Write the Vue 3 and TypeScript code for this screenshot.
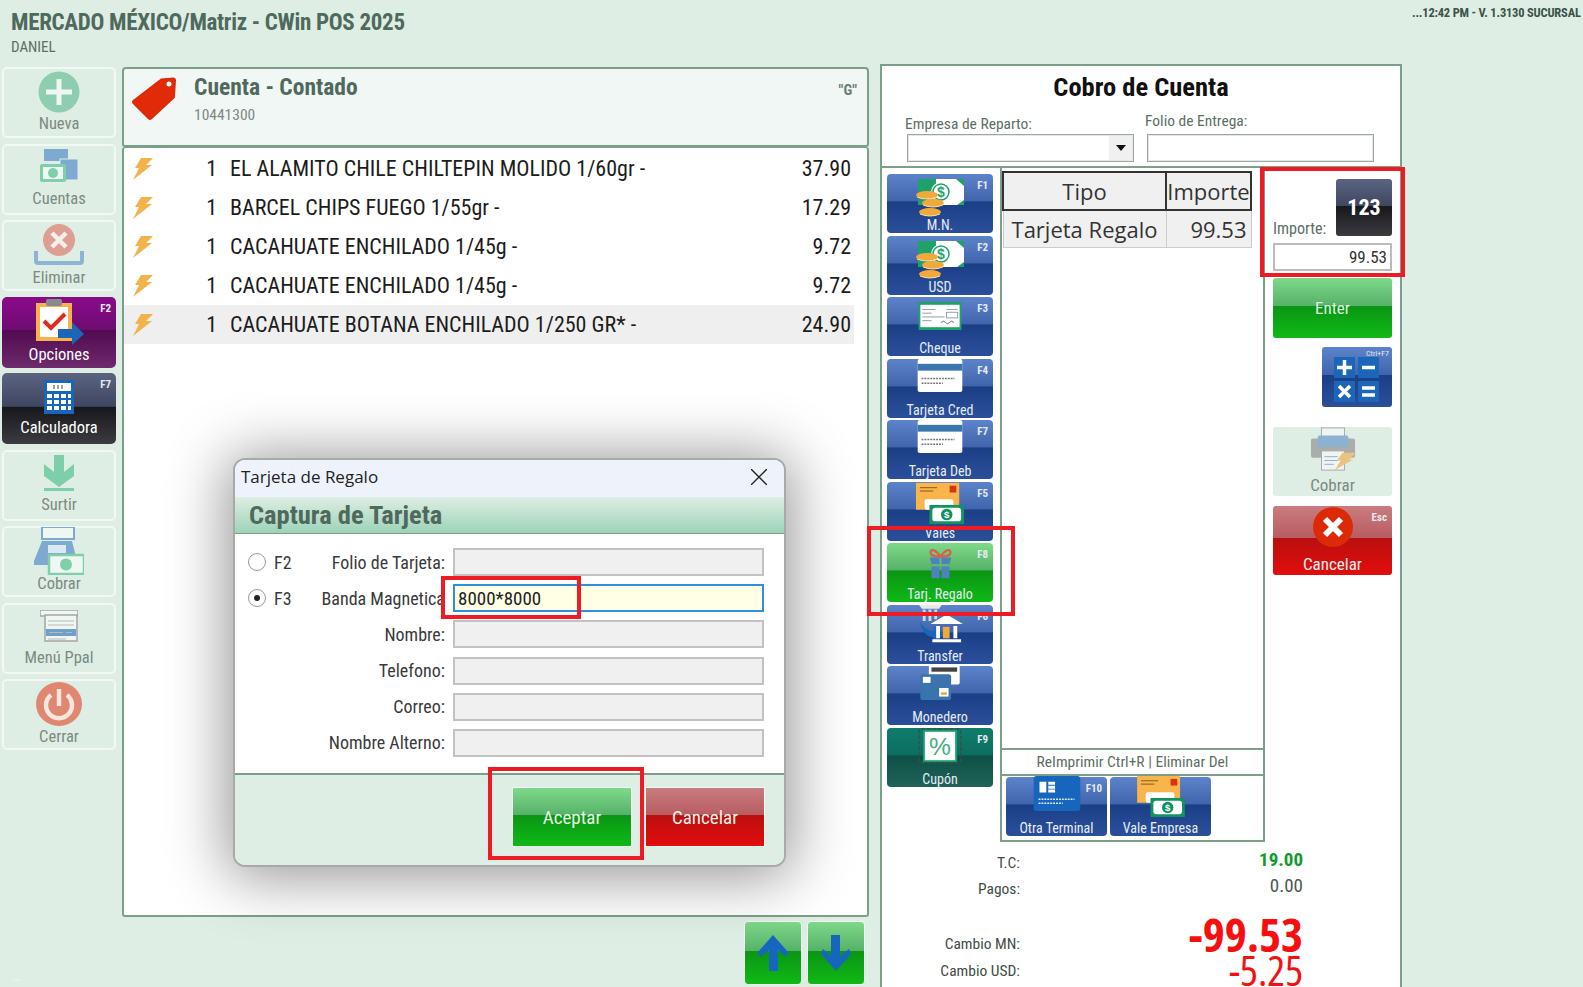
<script setup lang="ts">
interface Tile {
  label: string
  icon: string
  w: number
  h: number
  dy?: number
  ih?: number
  key?: string
  tone?: string
}

const sideTiles: Tile[] = [
  { label: 'Nueva', icon: 'plus', w: 42, h: 42, ih: 45 },
  { label: 'Cuentas', icon: 'cuentas', w: 38, h: 36, ih: 43 },
  { label: 'Eliminar', icon: 'eliminar', w: 50, h: 42 },
  { label: 'Opciones', icon: 'opciones', w: 50, h: 46, key: 'F2', tone: 'purple' },
  { label: 'Calculadora', icon: 'calc', w: 30, h: 34, ih: 43, key: 'F7', tone: 'dark' },
  { label: 'Surtir', icon: 'surtir', w: 30, h: 36, ih: 43 },
  { label: 'Cobrar', icon: 'cobrar', w: 50, h: 48 },
  { label: 'Menú Ppal', icon: 'menu', w: 38, h: 32, ih: 43 },
  { label: 'Cerrar', icon: 'power', w: 46, h: 44 },
]

const products = [
  { qty: 1, name: 'EL ALAMITO CHILE CHILTEPIN MOLIDO 1/60gr -', price: '37.90' },
  { qty: 1, name: 'BARCEL CHIPS FUEGO 1/55gr -', price: '17.29' },
  { qty: 1, name: 'CACAHUATE ENCHILADO 1/45g -', price: '9.72' },
  { qty: 1, name: 'CACAHUATE ENCHILADO 1/45g -', price: '9.72' },
  { qty: 1, name: 'CACAHUATE BOTANA ENCHILADO 1/250 GR* -', price: '24.90', active: true },
]

const payTiles: Tile[] = [
  { label: 'M.N.', icon: 'money', w: 48, h: 38, dy: 5, key: 'F1', tone: 'blue' },
  { label: 'USD', icon: 'money', w: 48, h: 38, dy: 5, key: 'F2', tone: 'blue' },
  { label: 'Cheque', icon: 'cheque', w: 46, h: 28, dy: 5, key: 'F3', tone: 'blue' },
  { label: 'Tarjeta Cred', icon: 'card', w: 46, h: 33, dy: 0, key: 'F4', tone: 'blue' },
  { label: 'Tarjeta Deb', icon: 'card', w: 46, h: 33, dy: 0, key: 'F7', tone: 'blue' },
  { label: 'Vales', icon: 'vale', w: 48, h: 44, dy: 0, key: 'F5', tone: 'blue' },
  { label: 'Tarj. Regalo', icon: 'gift', w: 27, h: 34, dy: 3, key: 'F8', tone: 'green' },
  { label: 'Transfer', icon: 'bank', w: 46, h: 46, dy: -5, key: 'F6', tone: 'blue' },
  { label: 'Monedero', icon: 'wallet', w: 44, h: 36, dy: -2, key: '', tone: 'blue' },
  { label: 'Cupón', icon: 'coupon', w: 44, h: 36, dy: 0, key: 'F9', tone: 'teal' },
]

const extraTiles: Tile[] = [
  { label: 'Otra Terminal', icon: 'terminal', w: 48, h: 35, dy: -1, key: 'F10', tone: 'blue' },
  { label: 'Vale Empresa', icon: 'vale', w: 48, h: 42, dy: -1, tone: 'blue' },
]

const cardFields = [
  { label: 'Folio de Tarjeta:', radio: 'F2', value: '' },
  { label: 'Banda Magnetica', radio: 'F3', value: '8000*8000', checked: true, focus: true },
  { label: 'Nombre:', value: '' },
  { label: 'Telefono:', value: '' },
  { label: 'Correo:', value: '' },
  { label: 'Nombre Alterno:', value: '' },
]
</script>

<template>
  <div class="page">
    <svg class="defs" aria-hidden="true">
      <symbol id="i-plus" viewBox="0 0 42 42">
        <circle cx="21" cy="21" r="20.5" fill="#8fcdb0" />
        <path d="M21 8v26M8 21h26" stroke="#eef7f2" stroke-width="5" />
      </symbol>
      <symbol id="i-cuentas" viewBox="0 0 38 36">
        <rect x="4" y="0" width="24" height="12" fill="#7ea9d1" />
        <rect x="20" y="10" width="18" height="21" fill="#7ea9d1" stroke="#deeee4" />
        <rect x="0" y="15" width="26" height="18" rx="2" fill="#7fd0aa" />
        <rect x="3" y="18" width="20" height="12" fill="#eef7f2" />
        <circle cx="13" cy="24" r="5" fill="#7fd0aa" />
      </symbol>
      <symbol id="i-eliminar" viewBox="0 0 50 42">
        <path d="M2 27v10a2 2 0 0 0 2 2h42a2 2 0 0 0 2-2V27" fill="none" stroke="#8fb3d4" stroke-width="4" />
        <circle cx="25" cy="16" r="16" fill="#dd9f92" />
        <path d="M18 9l14 14M32 9L18 23" stroke="#f6eeea" stroke-width="4.5" />
      </symbol>
      <symbol id="i-opciones" viewBox="0 0 50 46">
        <rect x="2" y="4" width="36" height="38" fill="#f7b24c" />
        <rect x="6" y="8" width="28" height="30" fill="#fff" />
        <rect x="12" y="0" width="16" height="7" rx="2" fill="#8a8a8a" />
        <path d="M10 22l7 7 14-14" fill="none" stroke="#e02a1c" stroke-width="4" />
        <path d="M24 30h14v-7l12 12-12 11v-7H24z" fill="#1b66b8" />
      </symbol>
      <symbol id="i-calc" viewBox="0 0 30 34">
        <rect width="30" height="34" fill="#1766bd" />
        <rect x="3" y="3" width="24" height="8" fill="#fff" />
        <path d="M10 5v4M14 5v4M18 5v4" stroke="#444" />
        <path d="M3 14h5v4H3zM10 14h5v4h-5zM17 14h5v4h-5zM24 14h3v4h-3zM3 20h5v4H3zM10 20h5v4h-5zM17 20h5v4h-5zM24 20h3v4h-3zM3 26h5v4H3zM10 26h5v4h-5zM17 26h5v4h-5zM24 26h3v4h-3z" fill="#fff" />
      </symbol>
      <symbol id="i-surtir" viewBox="0 0 30 36">
        <path d="M10 0h10v17l10-8v12L15 32 0 21V9l10 8z" fill="#7dcfa9" />
        <rect y="33" width="30" height="3" fill="#7dcfa9" />
      </symbol>
      <symbol id="i-cobrar" viewBox="0 0 50 48">
        <rect x="8" y="0" width="32" height="12" fill="#eef7f2" stroke="#7ea9d1" stroke-width="2" />
        <path d="M8 14h30l6 24H0v-4z" fill="#7ea9d1" />
        <path d="M14 18h18v8H14z" fill="#dbe9f4" />
        <rect x="15" y="28" width="35" height="19" fill="#eef7f2" stroke="#7fd0aa" stroke-width="2.5" />
        <circle cx="32" cy="37.500" r="6" fill="#7fd0aa" />
      </symbol>
      <symbol id="i-menu" viewBox="0 0 38 32">
        <rect x="0" y="0" width="38" height="6" fill="#eef7f2" stroke="#a5a5a5" stroke-width="1.5" />
        <rect x="5" y="5" width="32" height="26" fill="#eef7f2" stroke="#a5a5a5" stroke-width="1.5" />
        <rect x="6" y="19" width="30" height="7" fill="#6f9fcb" />
        <path d="M8 11h26M8 15h26M9 22.500h14M26 22.500h6M8 29h18" stroke="#b8b8b8" stroke-width="1.2" />
      </symbol>
      <symbol id="i-power" viewBox="0 0 46 44">
        <ellipse cx="23" cy="22" rx="23" ry="22" fill="#df8771" />
        <path d="M15 13a13 13 0 1 0 16 0" fill="none" stroke="#f5e6df" stroke-width="4.500" />
        <path d="M23 7v17" stroke="#f5e6df" stroke-width="4.500" />
      </symbol>
      <symbol id="i-tag" viewBox="0 0 44 44">
        <path d="M29 1.500l12-1q3 0 3 3l-1 16q0 2-2 3L20 42q-2 2-4 0L1 27q-2-2 0-4z" fill="#e02a08" />
        <circle cx="37" cy="7" r="2.500" fill="#fff" />
      </symbol>
      <symbol id="i-bolt" viewBox="0 0 20 22">
        <path d="M8 0h12l-7 7h6L0 22l6-12H2z" fill="#f2b24c" />
      </symbol>
      <symbol id="i-money" viewBox="0 0 48 38">
        <rect x="2" y="0" width="46" height="26" fill="#fff" />
        <path d="M48 0h-8l8 7zM48 26h-7l7-5z" fill="#1ea26a" />
        <rect x="2" y="0" width="18" height="26" fill="#1ea26a" />
        <circle cx="25" cy="13" r="10" fill="#fff" />
        <circle cx="25" cy="13" r="8" fill="none" stroke="#1ea26a" stroke-width="1.500" />
        <text x="25" y="18" font-size="14" font-weight="700" text-anchor="middle" fill="#1ea26a" font-family="Liberation Sans, sans-serif">$</text>
        <ellipse cx="11" cy="16" rx="11" ry="4" fill="#f2a93b" />
        <ellipse cx="17" cy="24" rx="11" ry="4" fill="#f2a93b" />
        <ellipse cx="14" cy="33" rx="11" ry="4" fill="#f2a93b" />
        <path d="M1 18q10 4 20 0M7 26q10 4 20 0M4 35q10 4 20 0" fill="none" stroke="#fbe0a8" />
      </symbol>
      <symbol id="i-cheque" viewBox="0 0 46 30">
        <rect width="46" height="30" fill="#1ea26a" />
        <rect x="2" y="3" width="42" height="24" fill="#fff" />
        <path d="M4 8h14M30 8h12M4 12h10M4 16h24M4 20h10" stroke="#8a9aa0" />
        <rect x="30" y="11" width="12" height="6" fill="none" stroke="#8a9aa0" />
        <path d="M24 22q3-3 5 0t4 0 5 0" fill="none" stroke="#666" />
      </symbol>
      <symbol id="i-card" viewBox="0 0 46 34">
        <rect width="46" height="34" rx="2" fill="#fff" />
        <rect y="5" width="46" height="7" fill="#3b76ad" />
        <path d="M4 20h34M4 25h22" stroke="#777" stroke-width="1.500" stroke-dasharray="2 1" />
      </symbol>
      <symbol id="i-vale" viewBox="0 0 50 44">
        <rect width="45" height="28" fill="#f9b44c" />
        <path d="M4 5h18M4 8.500h14" stroke="#7a5a20" />
        <rect x="35" y="3" width="7" height="7" fill="#d9340f" />
        <rect x="9" y="17" width="30" height="11" rx="2" fill="#fff" />
        <rect x="14" y="23" width="36" height="20" fill="#11925f" />
        <rect x="17" y="26" width="30" height="14" rx="3" fill="#fff" />
        <circle cx="32" cy="33" r="6" fill="#11925f" />
        <text x="32" y="37" font-size="10" font-weight="700" text-anchor="middle" fill="#fff" font-family="Liberation Sans, sans-serif">$</text>
      </symbol>
      <symbol id="i-gift" viewBox="0 0 30 34">
        <path d="M15 10C8 0 3 2 4 6s6 4 11 4c5 0 10 0 11-4s-4-6-11 4z" fill="none" stroke="#d9604a" stroke-width="2.500" />
        <path d="M3 11h11v7H5zM16 11h11l-2 7h-9zM5 21h9v13H5zM16 21h9v13h-9z" fill="#4e82bd" />
      </symbol>
      <symbol id="i-bank" viewBox="0 0 48 44">
        <path d="M2 3h24l-3 4H5z" fill="#e9e9e9" />
        <path d="M6 8h3v12H6zM12 8h3v12h-3zM18 8h3v10h-3z" fill="#d6d6d6" />
        <path d="M3 20q6 12 16 10l-2-5 12 9-12 8v-5Q6 36 3 20z" fill="#1b66b8" />
        <path d="M31 13l17 10H14z" fill="#fff" />
        <path d="M20 25h4v13h-4zM38 25h4v13h-4zM16 39h30v3H16z" fill="#fff" />
        <rect x="27" y="26" width="7" height="12" fill="#f2a93b" />
      </symbol>
      <symbol id="i-wallet" viewBox="0 0 46 42">
        <rect x="10" y="0" width="36" height="24" rx="2" fill="#fff" />
        <rect x="13" y="4" width="30" height="5" fill="#444" />
        <rect x="0" y="12" width="36" height="30" rx="3" fill="#3a74ad" />
        <rect x="3" y="15" width="9" height="7" fill="#fff" />
        <rect x="22" y="28" width="11" height="10" fill="#fff" />
        <rect x="24" y="33" width="7" height="3" fill="#f2a93b" />
      </symbol>
      <symbol id="i-coupon" viewBox="0 0 46 38">
        <rect x="1" y="1" width="44" height="36" rx="2" fill="none" stroke="#3b4e4b" stroke-width="1.500" stroke-dasharray="4 2" />
        <rect x="5" y="2" width="36" height="34" fill="#19a069" />
        <rect x="7" y="4" width="32" height="30" fill="#fff" />
        <text x="23" y="29" font-size="26" text-anchor="middle" fill="#3fb07f" font-family="Liberation Sans, sans-serif">%</text>
      </symbol>
      <symbol id="i-terminal" viewBox="0 0 48 36">
        <rect width="48" height="36" rx="3" fill="#1766bd" />
        <path d="M6 6h7v11H6zM15 6h7v3h-7zM15 10h7v3h-7zM15 14h7v3h-7z" fill="#fff" />
        <path d="M5 24h37M5 28h25" stroke="#dce9f6" stroke-width="1.500" stroke-dasharray="2 1" />
      </symbol>
      <symbol id="i-ops" viewBox="0 0 46 46">
        <rect width="21" height="21" fill="#1b66b8" />
        <rect x="24" width="21" height="21" fill="#1b66b8" />
        <rect y="24" width="21" height="21" fill="#1b66b8" />
        <rect x="24" y="24" width="21" height="21" fill="#1b66b8" />
        <path d="M10.500 3v15M3 10.500h15M28 10.500h13M5 29l11 11M16 29L5 40M28 31h13M28 38h13" stroke="#fff" stroke-width="3.500" />
      </symbol>
      <symbol id="i-printer" viewBox="0 0 48 44">
        <rect x="12" y="0" width="24" height="12" fill="#f0f5f2" stroke="#a9a9a9" />
        <path d="M3 11h42a2 2 0 0 1 2 2v16a2 2 0 0 1-2 2H3a2 2 0 0 1-2-2V13a2 2 0 0 1 2-2z" fill="#a9aeab" />
        <rect x="8" y="8" width="32" height="12" rx="2" fill="#8db1d1" />
        <rect x="12" y="24" width="24" height="20" fill="#f0f5f2" stroke="#a9a9a9" />
        <path d="M15 30h14M15 34h14M15 38h10" stroke="#8db1d1" />
        <path d="M34 26h14l-7 7h4L26 44l6-10h-4z" fill="#eac382" />
      </symbol>
      <symbol id="i-cancel" viewBox="0 0 40 40">
        <circle cx="20" cy="20" r="20" fill="#dd2a06" />
        <path d="M12 12l16 16M28 12L12 28" stroke="#fff" stroke-width="6" />
      </symbol>
      <symbol id="i-up" viewBox="0 0 30 36">
        <path d="M15 0l15 17-2 5-8-7v21h-9V15l-9 7-2-5z" fill="#1766bd" />
      </symbol>
      <symbol id="i-down" viewBox="0 0 30 36">
        <path d="M10 0h9v21l9-7 2 5-15 17L0 19l2-5 8 7z" fill="#1766bd" />
      </symbol>
    </svg>

    <header class="topbar">
      <div>
        <div class="app-title">MERCADO MÉXICO/Matriz - CWin POS 2025</div>
        <div class="user">DANIEL</div>
      </div>
      <div class="clock">...12:42 PM - V. 1.3130 SUCURSAL</div>
    </header>

    <div class="work">
      <nav class="side">
        <button v-for="t in sideTiles" :key="t.label" class="side-tile" :class="t.tone">
          <span v-if="t.key" class="fkey">{{ t.key }}</span>
          <span class="side-icon" :style="{ height: (t.ih ?? 46) + 'px' }">
            <svg :width="t.w" :height="t.h"><use :href="'#i-' + t.icon" /></svg>
          </span>
          <span class="side-label">{{ t.label }}</span>
        </button>
      </nav>

      <main class="center">
        <section class="ticket-head">
          <svg class="tag" width="44" height="44"><use href="#i-tag" /></svg>
          <div class="ticket-text">
            <div class="ticket-title">Cuenta - Contado</div>
            <div class="ticket-no">10441300</div>
          </div>
          <div class="ticket-flag">"G"</div>
        </section>

        <section class="ticket-list">
          <div v-for="(p, i) in products" :key="i" class="line" :class="{ active: p.active }">
            <svg class="bolt" width="20" height="22"><use href="#i-bolt" /></svg>
            <span class="qty">{{ p.qty }}</span>
            <span class="name">{{ p.name }}</span>
            <span class="price">{{ p.price }}</span>
          </div>
        </section>

        <div class="arrows">
          <button class="arrow green"><svg width="30" height="36"><use href="#i-up" /></svg></button>
          <button class="arrow green"><svg width="30" height="36"><use href="#i-down" /></svg></button>
        </div>
      </main>

      <aside class="charge">
        <div class="charge-top">
          <h1>Cobro de Cuenta</h1>
          <div class="delivery">
            <label class="field">
              <span class="lab-a">Empresa de Reparto:</span>
              <span class="select"><span class="select-btn"><i class="caret"></i></span></span>
            </label>
            <label class="field">
              <span class="lab-b">Folio de Entrega:</span>
              <input class="plain" readonly />
            </label>
          </div>
        </div>

        <div class="charge-body">
          <div class="pay-col">
            <button v-for="t in payTiles" :key="t.label" class="pay-tile" :class="t.tone">
              <span v-if="t.key" class="fkey">{{ t.key }}</span>
              <svg class="pay-icon" :width="t.w" :height="t.h" :style="{ marginTop: t.dy + 'px' }"><use :href="'#i-' + t.icon" /></svg>
              <span class="pay-label">{{ t.label }}</span>
            </button>
          </div>

          <div class="pay-mid">
            <div class="pay-grid">
              <table>
                <thead>
                  <tr><th class="c1">Tipo</th><th class="c2">Importe</th></tr>
                </thead>
                <tbody>
                  <tr><td class="c1">Tarjeta Regalo</td><td class="c2 num">99.53</td></tr>
                </tbody>
              </table>
            </div>
            <div class="hint">ReImprimir Ctrl+R | Eliminar Del</div>
            <div class="extra">
              <button v-for="t in extraTiles" :key="t.label" class="pay-tile" :class="t.tone">
                <span v-if="t.key" class="fkey">{{ t.key }}</span>
                <svg class="pay-icon" :width="t.w" :height="t.h" :style="{ marginTop: t.dy + 'px' }"><use :href="'#i-' + t.icon" /></svg>
                <span class="pay-label">{{ t.label }}</span>
              </button>
            </div>
          </div>

          <div class="pay-right">
            <div class="amount-row">
              <span class="amount-label">Importe:</span>
              <button class="keypad dark">123</button>
            </div>
            <input class="amount" value="99.53" readonly />
            <button class="big green enter">Enter</button>
            <button class="ops blue">
              <span class="fkey tiny">Ctrl+F7</span>
              <svg width="46" height="46"><use href="#i-ops" /></svg>
            </button>
            <button class="big-tile off">
              <svg width="46" height="44"><use href="#i-printer" /></svg>
              <span>Cobrar</span>
            </button>
            <button class="big-tile red">
              <span class="fkey">Esc</span>
              <svg width="40" height="40"><use href="#i-cancel" /></svg>
              <span>Cancelar</span>
            </button>
          </div>
        </div>

        <div class="totals">
          <span class="t-lab">T.C:</span><span class="t-val tc">19.00</span>
          <span class="t-lab">Pagos:</span><span class="t-val">0.00</span>
          <span class="t-lab gap">Cambio MN:</span><span class="t-val gap change">-99.53</span>
          <span class="t-lab">Cambio USD:</span><span class="t-val usd">-5.25</span>
        </div>
      </aside>
    </div>

    <div class="dots">...</div>

    <div class="dialog">
      <div class="dlg-title">
        <span>Tarjeta de Regalo</span>
        <svg width="16" height="16" viewBox="0 0 16 16"><path d="M0 0l16 16M16 0L0 16" stroke="#222" stroke-width="1.400" /></svg>
      </div>
      <div class="dlg-head">Captura de Tarjeta</div>
      <div class="dlg-form">
        <div v-for="f in cardFields" :key="f.label" class="dlg-row">
          <span class="radio-cell">
            <template v-if="f.radio">
              <i class="radio" :class="{ on: f.checked }"></i>
              <b class="radio-key">{{ f.radio }}</b>
            </template>
          </span>
          <span class="dlg-label">{{ f.label }}</span>
          <input class="dlg-input" :class="{ focus: f.focus }" :value="f.value" readonly />
        </div>
      </div>
      <div class="dlg-foot">
        <button class="dlg-btn green">Aceptar</button>
        <button class="dlg-btn red">Cancelar</button>
      </div>
    </div>

    <div class="mark m-input"></div>
    <div class="mark m-accept"></div>
    <div class="mark m-gift"></div>
    <div class="mark m-amount"></div>
  </div>
</template>

<style scoped>
.page {
  position: relative;
  width: 1583px;
  height: 987px;
  overflow: hidden;
  background: #deeee4;
  color: #222;
  font-family: Roboto, "Open Sans", sans-serif;
  font-stretch: 75%;
}
.defs { display: none; }
button, input { border: 0; padding: 0; font-family: inherit; font-stretch: inherit; }

.topbar {
  display: flex;
  justify-content: space-between;
  height: 64px;
  padding-left: 11px;
}
.app-title {
  padding-top: 8px;
  font-size: 23px;
  line-height: 29px;
  letter-spacing: -.3px;
  font-weight: 700;
  color: #4f6a5c;
}
.user { font-size: 15px; line-height: 20px; color: #5c6f64; }
.clock {
  width: 171px;
  padding-top: 5px;
  white-space: nowrap;
  font-size: 12.500px;
  letter-spacing: -.2px;
  font-weight: 700;
  color: #3d5248;
}

.work { display: flex; }

.side {
  display: flex;
  flex-direction: column;
  gap: 5.500px;
  width: 114px;
  margin: 3px 0 0 2px;
}
.side-tile {
  position: relative;
  display: flex;
  flex-direction: column;
  align-items: center;
  height: 71px;
  background: #deeee4;
  border: 2px solid #f2f8f4;
  border-radius: 5px;
  color: #7c8a82;
}
.side-icon {
  display: flex;
  align-items: center;
  justify-content: center;
  flex: none;
}
.side-label { font-size: 16.500px; line-height: 20px; }
.side-tile.purple, .side-tile.dark { color: #fff; border: 0; padding-top: 2px; }

.fkey {
  position: absolute;
  top: 5px;
  right: 5px;
  font-size: 11px;
  font-weight: 700;
  color: #e4e9f2;
}
.fkey.tiny { top: 2px; right: 3px; font-size: 8px; font-weight: 400; }

.purple { background: linear-gradient(#8a0a8a 0, #6f0c72 46%, #520a50 47%, #6d2a6c 100%) !important; }
.dark { background: linear-gradient(#5a6480 0, #3f4662 47%, #18181c 48%, #3c3c40 100%) !important; }
.blue { background: linear-gradient(#5d83cb 0, #4065ad 46%, #1a3f86 47%, #2c4f9b 100%); }
.green { background: linear-gradient(#80d98a 0, #56b268 46%, #0a9514 47%, #10b916 100%); }
.red { background: linear-gradient(#c97c7f 0, #b85d62 46%, #bb0f0f 47%, #e20d0d 100%); }
.teal { background: linear-gradient(#0f7d6c 0, #0c6d60 46%, #0c4f47 47%, #1f6458 100%); }

.center {
  display: flex;
  flex-direction: column;
  width: 747px;
  margin: 3px 0 0 6px;
}
.ticket-head {
  display: flex;
  align-items: flex-start;
  height: 80px;
  padding: 4px 10px 0 8px;
  box-sizing: border-box;
  background: #f1f7f4;
  border: 2px solid #7c9f8a;
  border-radius: 4px 4px 3px 3px;
}
.tag { margin: 4px 0 0 0; flex: none; }
.ticket-text { margin-left: 18px; flex: 1; }
.ticket-title { font-size: 23.500px; line-height: 28px; font-weight: 700; color: #4f6a5c; }
.ticket-no { margin-top: 5px; font-size: 15.500px; color: #7c8a82; }
.ticket-flag { margin: 8px 0 0; font-size: 15px; font-weight: 700; color: #6b7d72; }

.ticket-list {
  height: 770px;
  box-sizing: border-box;
  padding-top: 1px;
  background: #fff;
  border: 2px solid #7c9f8a;
  border-top-width: 1px;
  border-radius: 3px;
}
.line {
  display: flex;
  align-items: center;
  height: 39px;
  margin-right: 13px;
  font-size: 22px;
  color: #1c1c1c;
}
.line.active { background: #efefef; }
.bolt { margin-left: 9px; flex: none; }
.qty { width: 64px; text-align: right; flex: none; }
.name { margin-left: 13px; flex: 1; }
.price { margin-right: 3px; }

.arrows {
  display: flex;
  justify-content: flex-end;
  gap: 5px;
  padding: 4px 4px 0 0;
}
.arrow {
  display: flex;
  align-items: center;
  justify-content: center;
  width: 58px;
  height: 64px;
  border: 1px solid #eef7f2;
  border-radius: 4px;
}

.charge {
  width: 518px;
  height: 930px;
  margin-left: 11px;
  background: #fff;
  border: 2px solid #7c9f8a;
}
.charge-top { height: 102px; border-bottom: 2px solid #7c9f8a; box-sizing: border-box; }
.charge-top h1 {
  margin: 0;
  padding-top: 3px;
  font-size: 26.500px;
  line-height: 35px;
  text-align: center;
  color: #111;
}
.delivery { display: flex; gap: 13px; padding: 9px 0 0 25px; }
.field { display: flex; flex-direction: column; width: 227px; color: #5c6f64; font-size: 15.500px; }
.lab-a { height: 21px; line-height: 23px; margin-left: -2px; }
.lab-b { height: 21px; line-height: 23px; margin: -3px 0 3px -2px; }
.select, .plain {
  display: flex;
  justify-content: flex-end;
  box-sizing: border-box;
  width: 227px;
  height: 28px;
  background: #fff;
  border: 1px solid #9ba8a0;
  box-shadow: inset 0 0 0 1px #e6e6e6;
}
.select-btn {
  display: flex;
  align-items: center;
  justify-content: center;
  width: 23px;
  margin: 1px;
  background: #f0f0f0;
}
.caret {
  border-left: 5px solid transparent;
  border-right: 5px solid transparent;
  border-top: 6px solid #111;
}

.charge-body { display: flex; height: 674px; }
.pay-col {
  display: flex;
  flex-direction: column;
  gap: 2.500px;
  width: 118px;
  padding: 6px 0 0 5px;
  flex: none;
  box-sizing: border-box;
}
.pay-tile {
  position: relative;
  display: flex;
  flex-direction: column;
  align-items: center;
  justify-content: space-between;
  width: 106px;
  height: 59px;
  flex: none;
  border-radius: 4px;
  color: #e6ecf6;
}
.pay-label { font-size: 14px; line-height: 15px; position: relative; }

.pay-mid {
  display: flex;
  flex-direction: column;
  width: 265px;
  height: 674px;
  flex: none;
  box-sizing: border-box;
  border-left: 2px solid #7c9f8a;
  border-right: 2px solid #7c9f8a;
  border-bottom: 2px solid #7c9f8a;
}
.pay-grid { height: 582px; flex: none; padding: 3px 0 0 0; border-bottom: 2px solid #7c9f8a; box-sizing: border-box; }
table {
  border-collapse: collapse;
  table-layout: fixed;
  width: 246px;
  font-family: "Open Sans", sans-serif;
  font-stretch: 100%;
}
th, td { height: 36px; padding: 0; font-size: 22px; font-weight: 400; overflow: hidden; white-space: nowrap; color: #333; }
th { background: #f0f0f0; border: 2px solid #333; }
td { background: #f0f0f0; border: 1px solid #ccc; text-align: center; }
.c1 { width: 161px; }
.c2 { width: 83px; }
.num { text-align: right; padding-right: 4px; }
.hint {
  height: 26px;
  flex: none;
  box-sizing: border-box;
  border-bottom: 2px solid #7c9f8a;
  text-align: center;
  font-size: 15.500px;
  line-height: 24px;
  color: #5c6f64;
}
.extra { display: flex; gap: 3px; padding: 1px 0 0 4px; }
.extra .pay-tile { width: 101px; }

.pay-right {
  display: flex;
  flex-direction: column;
  width: 127px;
  padding: 11px 0 0 8px;
  box-sizing: border-box;
  flex: none;
}
.amount-row { display: flex; justify-content: space-between; align-items: flex-end; width: 119px; }
.amount-label { font-size: 16px; color: #5c6f64; margin-bottom: -2px; }
.keypad {
  width: 56px;
  height: 57px;
  border-radius: 3px;
  color: #fff;
  font-size: 22px;
  font-weight: 700;
}
.amount {
  width: 119px;
  height: 28px;
  margin-top: 7px;
  padding: 0 3px;
  box-sizing: border-box;
  border: 2px solid #bbb;
  text-align: right;
  font-size: 17px;
  color: #333;
  outline: none;
}
.big { width: 119px; height: 60px; margin-top: 7px; border-radius: 3px; color: #dff3e0; font-size: 17px; }
.ops {
  position: relative;
  display: flex;
  align-items: center;
  justify-content: center;
  align-self: flex-end;
  width: 70px;
  height: 60px;
  margin: 9px 0 0;
  padding-top: 6px;
  border-radius: 3px;
}
.big-tile {
  position: relative;
  display: flex;
  flex-direction: column;
  align-items: center;
  justify-content: space-between;
  width: 119px;
  height: 69px;
  margin-top: 10px;
  padding-bottom: 1px;
  box-sizing: border-box;
  border-radius: 3px;
  font-size: 17px;
  color: #eee;
}
.big-tile.off { background: #deeee4; color: #7c8a82; margin-top: 20px; }
.big-tile.red svg { margin-top: 1px; }

.totals {
  display: grid;
  grid-template-columns: 138px 283px;
  grid-template-rows: 26px 26px 56px 28px;
  padding-top: 6px;
  font-size: 15.500px;
  color: #3f4d46;
}
.t-lab { text-align: right; line-height: 30px; }
.t-lab.gap { line-height: 32px; }
.t-lab:last-of-type { line-height: 34px; }
.t-val { text-align: right; line-height: 24px; font-size: 19px; color: #4b5a52; }
.tc { color: #129a2e; font-weight: 700; }
.gap { margin-top: 28px; height: 28px; }
.change {
  font-family: "Open Sans", sans-serif;
  font-size: 47px;
  line-height: 12px;
  font-weight: 700;
  color: #f50f0f;
}
.usd {
  font-family: "Open Sans", sans-serif;
  font-size: 42px;
  line-height: 28px;
  color: #f50f0f;
}

.dots {
  position: absolute;
  left: 12px;
  bottom: 6px;
  font-size: 12px;
  line-height: 8px;
  color: #f7fbf8;
}

.dialog {
  position: absolute;
  left: 233px;
  top: 458px;
  display: flex;
  flex-direction: column;
  width: 553px;
  height: 409px;
  box-sizing: border-box;
  overflow: hidden;
  background: #fff;
  border: 2px solid #a9a9a9;
  border-radius: 12px;
  box-shadow: 0 4px 60px 6px rgba(0, 0, 0, .42);
}
.dlg-title {
  display: flex;
  justify-content: space-between;
  align-items: center;
  height: 37px;
  flex: none;
  box-sizing: border-box;
  padding: 0 17px 4px 6px;
  background: #eef3fb;
  font-family: "Open Sans", sans-serif;
  font-stretch: 100%;
  font-size: 17px;
  color: #222;
}
.dlg-head {
  height: 37px;
  flex: none;
  padding-left: 14px;
  box-sizing: border-box;
  background: linear-gradient(#deeee4, #9dd3b8);
  border-bottom: 1px solid #7c9f8a;
  font-size: 26.500px;
  line-height: 35px;
  font-weight: 700;
  color: #4f6a5c;
}
.dlg-form {
  display: flex;
  flex-direction: column;
  gap: 8.200px;
  height: 239px;
  padding-top: 14px;
  box-sizing: border-box;
  flex: none;
}
.dlg-row { display: flex; align-items: center; height: 28px; font-size: 18px; color: #3a3a3a; }
.radio-cell { display: flex; align-items: center; gap: 8px; width: 67px; padding-left: 13px; box-sizing: border-box; flex: none; }
.radio {
  display: flex;
  align-items: center;
  justify-content: center;
  width: 16px;
  height: 16px;
  flex: none;
  border: 1px solid #999;
  border-radius: 50%;
  background: #fff;
}
.radio.on::after { content: ""; width: 6px; height: 6px; background: #222; border-radius: 50%; }
.radio-key { font-weight: 400; font-size: 18px; }
.dlg-label { width: 143px; flex: none; text-align: right; white-space: nowrap; }
.dlg-input {
  width: 311px;
  height: 28px;
  margin-left: 8px;
  padding: 0 3px;
  box-sizing: border-box;
  background: #f0f0f0;
  border: 2px solid #c2c2c2;
  font-size: 19px;
  color: #222;
  outline: none;
}
.dlg-input.focus { background: #ffffe6; border-color: #2f8fe0; }
.dlg-foot {
  display: flex;
  justify-content: flex-end;
  gap: 13px;
  flex: 1;
  padding: 12px 19px 0 0;
  background: #deeee4;
  border-top: 2px solid #7c9f8a;
}
.dlg-btn {
  width: 120px;
  height: 60px;
  border: 1px solid #f2f8f4;
  color: #e8f4e8;
  font-size: 19px;
}

.mark {
  position: absolute;
  box-sizing: border-box;
  border: 4px solid #ed1c24;
}
.m-input { left: 441px; top: 576px; width: 140px; height: 43px; }
.m-accept { left: 488px; top: 767px; width: 156px; height: 93px; }
.m-gift { left: 867px; top: 526px; width: 148px; height: 90px; }
.m-amount { left: 1260px; top: 167px; width: 145px; height: 110px; }
</style>
